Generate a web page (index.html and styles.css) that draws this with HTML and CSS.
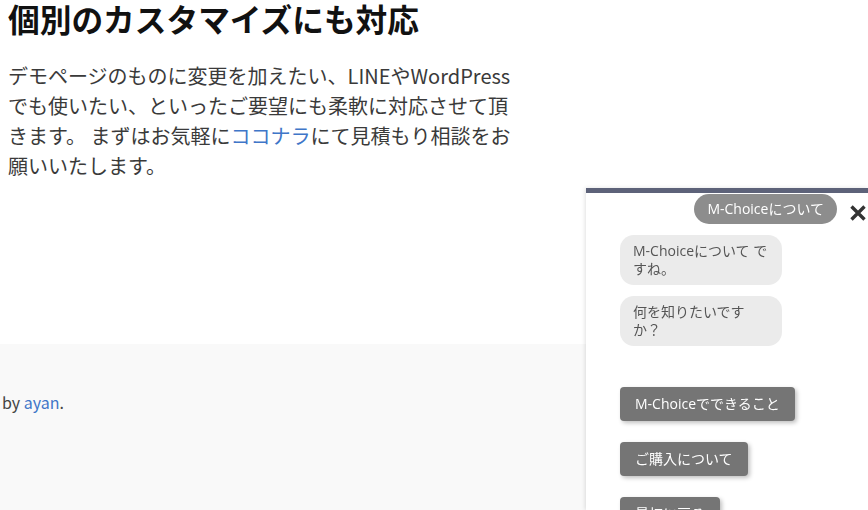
FILE: index.html
```html
<!DOCTYPE html>
<html>
<head>
    <title>個別のカスタマイズにも対応</title>
    <meta http-equiv="Content-Type" content="text/html; charset=utf-8" />
    <link rel="stylesheet" href="styles.css">
</head>
<body>
<div class="main">
    <h2 class="title">個別のカスタマイズにも対応</h2>
    <p class="text">デモページのものに変更を加えたい、LINEやWordPressでも使いたい、といったご要望にも柔軟に対応させて頂きます。 まずはお気軽に<a href="#">ココナラ</a>にて見積もり相談をお願いいたします。</p>
</div>

<div class="footer">
    <div class="credit">by <a href="#">ayan</a>.</div>
</div>

<!-- チャット画面 -->
<div class="chat">
    <div class="chat-top">
        <div class="bubble-user">M-Choiceについて</div>
        <div class="chat-close">
            <svg width="16" height="16" viewBox="0 0 16 16"><path d="M1.5 1.5 L14.5 14.5 M14.5 1.5 L1.5 14.5" stroke="#333" stroke-width="3.4"/></svg>
        </div>
    </div>
    <div class="bubble-bot">M-Choiceについて ですね。</div>
    <div class="bubble-bot">何を知りたいですか？</div>

    <div class="choices">
        <div class="choice">M-Choiceでできること</div>
        <div class="choice">ご購入について</div>
        <div class="choice">最初に戻る</div>
    </div>
</div>
</body>
</html>
```

FILE: styles.css
```css
html, body {margin: 0; height: 100%; overflow: hidden;}
body{
    font-family: "Noto Sans CJK JP", "Noto Sans", sans-serif;
    color: #333;
    background: white;
}
a{
    color: #3f76c8;
    text-decoration: none;
}
.main{
    padding: 0 0 163px 8px;
    width: 514px;
}
.title{
    margin: 0;
    font-size: 31.7px;
    line-height: 36px;
    font-weight: bold;
    color: #111;
}
.text{
    margin: 25px 0 0 0;
    font-size: 20px;
    line-height: 30px;
    color: #3a3a3a;
}
.footer{
    background: #f9f9f9;
    height: 200px;
    padding-top: 46px;
    box-sizing: border-box;
}
.credit{
    padding-left: 2px;
    font-size: 16px;
    line-height: 24px;
    color: #444;
}

/* チャット */
.chat{
    position: fixed;
    top: 188px;
    left: 586px;
    right: 0;
    bottom: 0;
    background: white;
    border-top: 5px solid #5d6279;
    box-shadow: -1px 0 4px rgba(0, 0, 0, 0.12);
    padding-left: 34px;
    font-family: "Open Sans", "Noto Sans CJK JP", sans-serif;
    font-size: 14px;
}
.chat-top{
    display: flex;
    justify-content: flex-end;
    align-items: center;
    margin-top: 1px;
}
.bubble-user{
    background: #8d8d8d;
    color: white;
    border-radius: 15px;
    padding: 0 13px;
    height: 30px;
    line-height: 30px;
}
.chat-close{
    display: flex;
    width: 31px;
    justify-content: flex-end;
    padding-right: 2px;
    box-sizing: border-box;
    margin-top: 8px;
}
.bubble-bot{
    background: #ebebeb;
    color: #555;
    border-radius: 14px;
    width: 136px;
    padding: 7px 13px;
    line-height: 18px;
    margin-top: 11px;
}
.choices{
    display: flex;
    flex-direction: column;
    align-items: flex-start;
    gap: 21px;
    margin-top: 41px;
}
.choice{
    background: #757575;
    color: white;
    border-radius: 4px;
    height: 34px;
    line-height: 34px;
    padding: 0 15px;
    box-shadow: 2px 2px 4px rgba(0, 0, 0, 0.25);
}
```
